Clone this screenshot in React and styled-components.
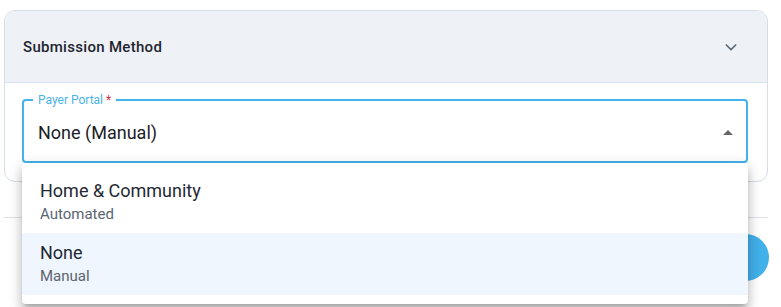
import React from "react";
import styled, { createGlobalStyle } from "styled-components";

const Global = createGlobalStyle`
  html, body { margin: 0; padding: 0; background: #ffffff; }
  body { font-family: Roboto, "Liberation Sans", Arial, sans-serif; color: #1f2733; }
  * { box-sizing: border-box; }
`;

const Page = styled.div`
  width: 781px;
  height: 307px;
  overflow: hidden;
  padding: 10px 13px 0 4px;
  display: flex;
  flex-direction: column;
`;

const Card = styled.section`
  border: 1px solid #d6dee8;
  border-radius: 11px;
  background: #ffffff;
`;

const Header = styled.div`
  height: 72px;
  display: flex;
  align-items: center;
  justify-content: space-between;
  padding: 0 28px 0 18px;
  background: #eef2f7;
  border-bottom: 1px solid #d3e3f1;
  border-radius: 10px 10px 0 0;
`;

const Title = styled.h3`
  margin: 0;
  font-size: 15px;
  font-weight: 500;
  color: #1e2530;
  letter-spacing: 0.3px;
`;

const Body = styled.div`
  padding: 10px 19px 18px 17px;
`;

const FieldWrap = styled.div`
  position: relative;
`;

const Fieldset = styled.fieldset`
  margin: 0;
  border: 2px solid #44b3ea;
  border-radius: 4px;
  padding: 14px 6px 16px 14px;
  display: flex;
  align-items: center;
  justify-content: space-between;
`;

const Legend = styled.legend`
  margin-left: -5px;
  padding: 0 5px;
  font-size: 12px;
  line-height: 14px;
  color: #4ab3ea;
`;

const Req = styled.span`
  color: #d2324a;
`;

const Value = styled.span`
  font-size: 18px;
  line-height: 24px;
  color: #1b2028;
`;

const Menu = styled.ul`
  position: absolute;
  left: 0;
  right: 0;
  top: 100%;
  margin: 0;
  list-style: none;
  padding: 8px 0 9px;
  background: #ffffff;
  border-radius: 4px;
  box-shadow: 0px 5px 5px -3px rgba(0, 0, 0, 0.2),
    0px 8px 10px 1px rgba(0, 0, 0, 0.14), 0px 3px 14px 2px rgba(0, 0, 0, 0.12);
  z-index: 10;
`;

const Item = styled.li`
  padding: 8px 18px;
  background: ${(p) => (p.$selected ? "#eff6fd" : "transparent")};
  display: flex;
  flex-direction: column;
`;

const ItemTitle = styled.span`
  font-size: 18px;
  line-height: 24px;
  color: #1f2733;
`;

const ItemSub = styled.span`
  font-size: 15px;
  line-height: 22px;
  color: #5b6471;
`;

const Divider = styled.hr`
  margin: 35px 0 0;
  border: 0;
  border-top: 1px solid #dde1e6;
`;

const Actions = styled.div`
  display: flex;
  justify-content: flex-end;
  padding-top: 16px;
  margin-right: -1px;
`;

const PrimaryButton = styled.button`
  height: 47px;
  width: 130px;
  border: 0;
  border-radius: 24px;
  background: #42b1ea;
  color: #ffffff;
  font-family: inherit;
  font-size: 15px;
  font-weight: 500;
`;

const ChevronDown = () => (
  <svg width="16" height="16" viewBox="0 0 24 24" fill="none" stroke="#5f6e7d" strokeWidth="2.6" strokeLinecap="round" strokeLinejoin="round">
    <path d="M5 9l7 7 7-7" />
  </svg>
);

const ArrowUp = () => (
  <svg width="24" height="24" viewBox="0 0 24 24" fill="#666">
    <path d="M7 14l5-5 5 5z" />
  </svg>
);

export default function App() {
  return (
    <>
      <Global />
      <Page>
        <Card>
          <Header>
            <Title>Submission Method</Title>
            <ChevronDown />
          </Header>
          <Body>
            <FieldWrap>
              <Fieldset>
                <Legend>
                  Payer Portal <Req>*</Req>
                </Legend>
                <Value>None (Manual)</Value>
                <ArrowUp />
              </Fieldset>
              <Menu>
                <Item>
                  <ItemTitle>Home &amp; Community</ItemTitle>
                  <ItemSub>Automated</ItemSub>
                </Item>
                <Item $selected>
                  <ItemTitle>None</ItemTitle>
                  <ItemSub>Manual</ItemSub>
                </Item>
              </Menu>
            </FieldWrap>
          </Body>
        </Card>
        <Divider />
        <Actions>
          <PrimaryButton>Save</PrimaryButton>
        </Actions>
      </Page>
    </>
  );
}
